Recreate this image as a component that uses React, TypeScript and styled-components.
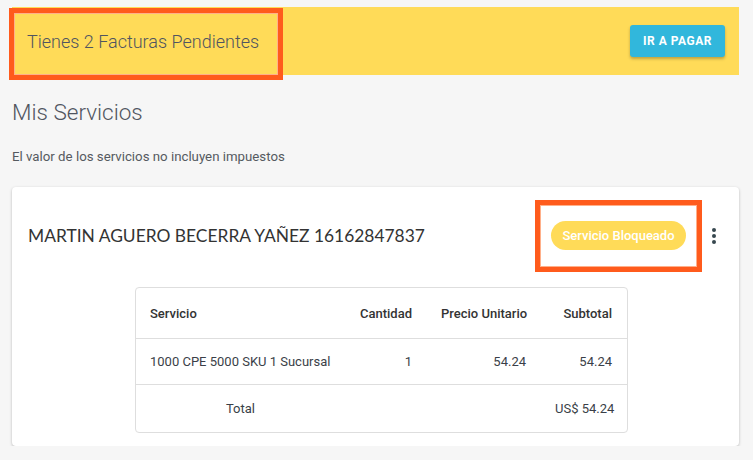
import React from "react";
import styled, { createGlobalStyle } from "styled-components";

type Row = {
  servicio: string;
  cantidad: number;
  precio: string;
  subtotal: string;
};

const rows: Row[] = [
  {
    servicio: "1000 CPE 5000 SKU 1 Sucursal",
    cantidad: 1,
    precio: "54.24",
    subtotal: "54.24",
  },
];

const GlobalStyle = createGlobalStyle`
  body {
    margin: 0;
    background: #f6f6f6;
    font-family: Roboto, "Liberation Sans", sans-serif;
  }
`;

const Page = styled.div`
  padding: 7px 14px 0 12px;
`;

const Banner = styled.div`
  position: relative;
  display: flex;
  align-items: center;
  justify-content: space-between;
  height: 68px;
  padding: 0 14px 0 15px;
  background: #ffdb58;
`;

const BannerTitle = styled.div`
  font-size: 18px;
  font-weight: 300;
  color: #505560;
`;

const Highlight = styled.div<{ $top: number; $left: number; $w: number; $h: number }>`
  position: absolute;
  top: ${(p) => p.$top}px;
  left: ${(p) => p.$left}px;
  width: ${(p) => p.$w}px;
  height: ${(p) => p.$h}px;
  box-sizing: border-box;
  border: 5px solid #ff5b1c;
  box-shadow: inset 0 0 0 1px #ffb08a;
  pointer-events: none;
`;

const PayButton = styled.button`
  height: 32px;
  width: 95px;
  border: none;
  border-radius: 3px;
  background: #31b7dc;
  color: #fff;
  font-family: Roboto, "Liberation Sans", sans-serif;
  font-size: 12px;
  font-weight: 700;
  letter-spacing: 0.5px;
  box-shadow: 0 2px 3px rgba(0, 0, 0, 0.25);
`;

const Heading = styled.h1`
  margin: 23px 0 0;
  font-size: 22.5px;
  font-weight: 300;
  color: #505560;
  line-height: 28px;
`;

const Note = styled.p`
  margin: 23px 0 0;
  font-size: 13.25px;
  color: #555a60;
  line-height: 16px;
`;

const Card = styled.div`
  margin-top: 22px;
  background: #fff;
  border-radius: 4px;
  box-shadow: 0 1px 3px rgba(0, 0, 0, 0.25);
  padding-bottom: 13px;
`;

const CardHeader = styled.div`
  position: relative;
  display: flex;
  align-items: center;
  height: 97px;
  padding: 0 20px 3px 16px;
`;

const ClientName = styled.div`
  flex: 1;
  font-family: Lato, "Liberation Sans", sans-serif;
  font-size: 17.4px;
  color: #333;
`;

const BadgeWrap = styled.div`
  position: relative;
  display: flex;
  align-items: center;
  justify-content: center;
  width: 167px;
  height: 72px;
`;

const Badge = styled.span`
  display: inline-flex;
  align-items: center;
  height: 29px;
  padding: 0 11px;
  border-radius: 15px;
  background: #ffdb58;
  color: #fff;
  font-size: 13px;
  font-weight: 500;
`;

const MoreButton = styled.div`
  display: flex;
  align-items: center;
  justify-content: center;
  width: 10px;
  margin-left: 7px;
  color: #37474f;
`;

const Table = styled.div`
  width: 493px;
  margin-left: 123px;
  border: 1px solid #dedede;
  border-radius: 4px;
  box-sizing: border-box;
`;

const TableRow = styled.div<{ $height: number; $last?: boolean }>`
  display: grid;
  grid-template-columns: 210px 81px 114px 1fr;
  align-items: center;
  height: ${(p) => p.$height}px;
  border-bottom: ${(p) => (p.$last ? "none" : "1px solid #dedede")};
  font-size: 13px;
  color: #333;
`;

const Cell = styled.div<{ $align?: string; $head?: boolean }>`
  padding: 0 15px 0 14px;
  white-space: nowrap;
  text-align: ${(p) => p.$align || "left"};
  font-weight: ${(p) => (p.$head ? 500 : 400)};
  color: ${(p) => (p.$head ? "#333" : "#3a3f48")};
`;

const DotsIcon = () => (
  <svg width="4" height="16" viewBox="0 0 4 16">
    <circle cx="2" cy="2" r="2" fill="currentColor" />
    <circle cx="2" cy="8" r="2" fill="currentColor" />
    <circle cx="2" cy="14" r="2" fill="currentColor" />
  </svg>
);

export default function App() {
  return (
    <>
      <GlobalStyle />
      <Page>
        <Banner>
          <BannerTitle>Tienes 2 Facturas Pendientes</BannerTitle>
          <PayButton>IR A PAGAR</PayButton>
          <Highlight $top={1} $left={-3} $w={274} $h={72} />
        </Banner>
        <Heading>Mis Servicios</Heading>
        <Note>El valor de los servicios no incluyen impuestos</Note>
        <Card>
          <CardHeader>
            <ClientName>MARTIN AGUERO BECERRA YAÑEZ 16162847837</ClientName>
            <BadgeWrap>
              <Badge>Servicio Bloqueado</Badge>
              <Highlight $top={0} $left={0} $w={167} $h={72} />
            </BadgeWrap>
            <MoreButton>
              <DotsIcon />
            </MoreButton>
          </CardHeader>
          <Table>
            <TableRow $height={50}>
              <Cell $head>Servicio</Cell>
              <Cell $head $align="right">Cantidad</Cell>
              <Cell $head $align="right">Precio Unitario</Cell>
              <Cell $head $align="right">Subtotal</Cell>
            </TableRow>
            {rows.map((r) => (
              <TableRow key={r.servicio} $height={45}>
                <Cell>{r.servicio}</Cell>
                <Cell $align="right">{r.cantidad}</Cell>
                <Cell $align="right">{r.precio}</Cell>
                <Cell $align="right">{r.subtotal}</Cell>
              </TableRow>
            ))}
            <TableRow $height={47} $last>
              <Cell $align="center">Total</Cell>
              <Cell />
              <Cell />
              <Cell $align="right">US$ 54.24</Cell>
            </TableRow>
          </Table>
        </Card>
      </Page>
    </>
  );
}
